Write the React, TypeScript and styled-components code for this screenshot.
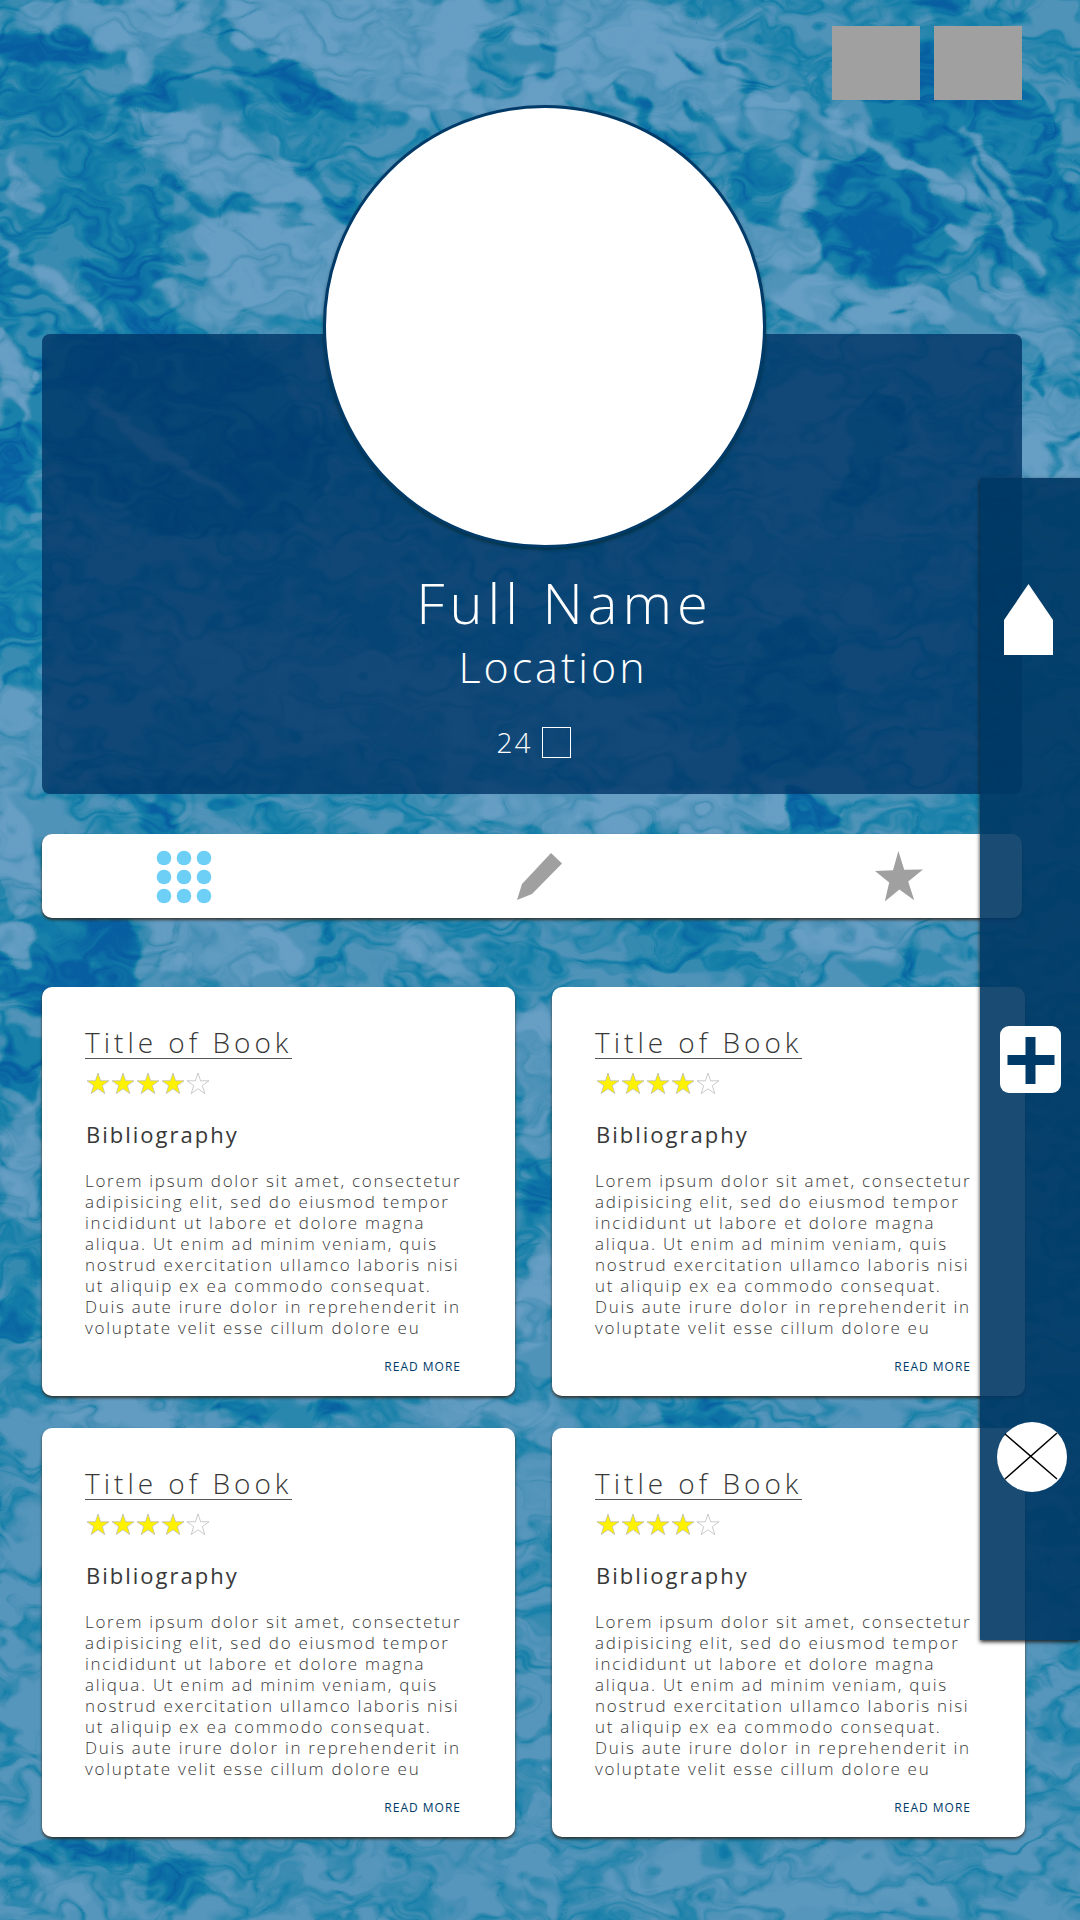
import React from "react";
import styled, { createGlobalStyle } from "styled-components";

const navy = "#003a68";
const grey = "#a0a0a0";
const sky = "#6dcff6";

const GlobalStyle = createGlobalStyle`
  *, *::before, *::after { box-sizing: border-box; }
  body {
    margin: 0;
    background: #3f87b2;
    color: #383838;
    font-family: "Open Sans", "Noto Sans", sans-serif;
    font-weight: 300;
  }
  h1, h2, h3, p { margin: 0; font-weight: 300; }
  button { border: 0; padding: 0; background: none; cursor: pointer; font: inherit; }
  svg { display: block; }
`;

const Page = styled.div`
  position: relative;
  isolation: isolate;
  overflow: hidden;
  min-height: 100vh;
  padding: 26px 58px 83px 42px;
`;

const Water = styled.svg`
  position: absolute;
  inset: 0;
  z-index: -1;
  width: 100%;
  height: 100%;
`;

const Actions = styled.header`
  display: flex;
  justify-content: flex-end;
  gap: 14px;
`;

const ActionButton = styled.button`
  width: 88px;
  height: 74px;
  background: ${grey};
`;

const Profile = styled.section`
  display: flex;
  flex-direction: column;
`;

const Avatar = styled.div`
  position: relative;
  align-self: center;
  width: 443px;
  height: 443px;
  margin: 5px 0 -214px 25px;
  border: 3px solid ${navy};
  border-radius: 50%;
  background: #fff;
  box-shadow: 0 2px 3px rgba(0, 40, 40, 0.6);
`;

const ProfilePanel = styled.div`
  display: flex;
  flex-direction: column;
  align-items: center;
  padding: 236px 0 36px;
  border-radius: 8px;
  background: rgba(0, 53, 102, 0.8);
  color: #fff;
`;

const Name = styled.h1`
  padding-left: 65px;
  font-size: 56px;
  line-height: 64px;
  letter-spacing: 5px;
`;

const Location = styled.p`
  margin-top: 9px;
  padding-left: 42px;
  font-size: 43px;
  line-height: 48px;
  letter-spacing: 3px;
`;

const Count = styled.p`
  display: flex;
  gap: 10px;
  margin-top: 36px;
  padding-left: 4px;
  font-size: 28px;
  line-height: 30px;
  letter-spacing: 2px;
`;

const CountBox = styled.span`
  width: 29px;
  height: 31px;
  border: 1px solid #fff;
`;

const Tabs = styled.nav`
  display: flex;
  justify-content: space-between;
  align-items: center;
  height: 84px;
  margin-top: 40px;
  padding: 0 95px 0 114px;
  border-radius: 10px;
  background: #fff;
  box-shadow: 0 2px 3px rgba(50, 40, 30, 0.85);
`;

const TabButton = styled.button<{ $active?: boolean }>`
  display: grid;
  place-items: center;
  width: 56px;
  height: 56px;
  color: ${(p) => (p.$active ? sky : grey)};
`;

const Books = styled.main`
  display: grid;
  grid-template-columns: 1fr 1fr;
  gap: 32px 37px;
  margin: 69px -3px 0 0;
`;

const Card = styled.article`
  display: flex;
  flex-direction: column;
  align-items: flex-start;
  padding: 39px 43px 21px;
  border-radius: 10px;
  background: #fff;
  box-shadow: 0 2px 3px rgba(50, 40, 30, 0.85);
`;

const Title = styled.h2`
  border-bottom: 1px solid #555;
  font-size: 28px;
  line-height: 32px;
  letter-spacing: 4px;
`;

const Stars = styled.div`
  display: flex;
  gap: 3px;
  margin-top: 14px;
  padding-left: 2px;
`;

const Subtitle = styled.h3`
  margin-top: 26px;
  padding-left: 1px;
  font-size: 22px;
  font-weight: 400;
  line-height: 28px;
  letter-spacing: 2px;
`;

const Summary = styled.p`
  margin-top: 22px;
  font-size: 17px;
  line-height: 21px;
  letter-spacing: 0.1em;
`;

const ReadMore = styled.a`
  align-self: flex-end;
  margin: 21px 11px 0 0;
  color: ${navy};
  font-size: 12px;
  font-weight: 400;
  line-height: 16px;
  letter-spacing: 1px;
  text-decoration: none;
`;

const SideBar = styled.nav`
  position: absolute;
  top: 478px;
  right: 0;
  display: flex;
  flex-direction: column;
  align-items: center;
  width: 100px;
  padding: 106px 0 148px;
  background: rgba(0, 55, 100, 0.9);
  box-shadow: 0 2px 4px rgba(20, 20, 20, 0.9);
`;

const SideButton = styled.button<{ $space?: number }>`
  margin-top: ${(p) => p.$space ?? 0}px;
`;

const starPoints = "11,0 13.6,7.8 22,7.8 15.3,12.6 17.8,20.6 11,15.8 4.2,20.6 6.7,12.6 0,7.8 8.4,7.8";

const ripples: [number, number, number, number, number, number][] = [
  // cx, cy, rx, ry, rotation, brightness
  [60, 240, 110, 180, -20, 60],
  [110, 20, 90, 22, 0, 225],
  [60, 50, 75, 15, 5, 0],
  [165, 35, 12, 60, 40, 225],
  [400, 50, 190, 60, 10, 225],
  [260, 70, 70, 16, 45, 20],
  [310, 90, 50, 14, 30, 10],
  [230, 165, 120, 30, 35, 225],
  [280, 240, 80, 80, 0, 230],
  [160, 95, 45, 16, 0, 15],
  [225, 98, 30, 12, 10, 15],
  [145, 155, 60, 9, 40, 30],
  [190, 190, 80, 8, 25, 40],
  [330, 190, 55, 10, 40, 30],
  [250, 205, 70, 6, 12, 60],
  [130, 215, 40, 18, 0, 50],
  [25, 190, 14, 28, -15, 220],
  [60, 290, 110, 8, 40, 215],
  [130, 275, 50, 26, 15, 0],
  [210, 312, 60, 12, 20, 180],
  [20, 380, 14, 60, -20, 225],
  [10, 470, 24, 70, 0, 0],
  [500, 60, 30, 40, 0, 90],
  [560, 55, 50, 14, 0, 45],
  [650, 60, 110, 60, 25, 220],
  [640, 110, 30, 7, 50, 30],
  [700, 120, 24, 6, 50, 30],
  [740, 70, 30, 6, 45, 30],
  [690, 60, 20, 5, 50, 30],
  [670, 140, 26, 6, 55, 30],
  [730, 150, 34, 6, 50, 40],
  [780, 110, 30, 30, 0, 215],
  [760, 190, 30, 40, 10, 50],
  [800, 210, 10, 60, 10, 230],
  [770, 245, 50, 20, 0, 225],
  [960, 110, 110, 60, 25, 0],
  [1030, 210, 50, 90, -20, 10],
  [890, 215, 75, 70, 0, 0],
  [920, 170, 110, 9, 30, 235],
  [1010, 220, 60, 9, 60, 225],
  [1000, 170, 60, 5, 42, 200],
  [960, 235, 22, 12, 40, 200],
  [860, 305, 90, 22, 3, 230],
  [960, 300, 60, 10, 30, 60],
  [850, 305, 18, 4, 0, 30],
  [903, 312, 12, 4, 10, 30],
  [1040, 330, 60, 26, 40, 210],
  [1055, 440, 40, 60, 0, 225],
  [1040, 380, 6, 18, 0, 20],
  [1060, 450, 5, 30, 30, 30],
  [970, 15, 60, 12, 10, 20],
  [180, 430, 160, 100, 20, 20],
  [160, 450, 90, 8, 35, 190],
  [640, 600, 160, 120, 0, 110],
  [400, 700, 300, 50, 10, 170],
  [830, 480, 90, 160, 10, 150],
  [870, 450, 26, 60, 20, 20],
  [790, 700, 50, 90, 10, 20],
  [20, 600, 30, 90, 0, 60],
  [20, 740, 40, 60, 0, 190],
  [250, 810, 200, 14, 15, 60],
  [150, 815, 60, 8, 45, 0],
  [640, 810, 200, 24, 0, 215],
  [810, 815, 26, 20, 0, 0],
  [10, 845, 24, 60, -20, 210],
  [60, 960, 90, 50, 0, 0],
  [10, 940, 24, 26, 0, 220],
  [150, 935, 12, 40, 15, 200],
  [230, 950, 70, 34, 0, 220],
  [330, 960, 16, 40, 0, 60],
  [440, 960, 60, 14, 40, 210],
  [680, 950, 60, 30, 0, 50],
  [860, 930, 60, 22, 0, 210],
  [900, 970, 60, 16, 0, 40],
  [20, 1060, 24, 36, 0, 0],
  [20, 1160, 18, 60, 0, 220],
  [535, 1080, 22, 80, 0, 210],
  [535, 1190, 14, 30, -30, 30],
  [535, 1290, 18, 60, 10, 215],
  [120, 1412, 80, 12, 0, 190],
  [280, 1412, 70, 14, 0, 30],
  [480, 1412, 80, 14, 0, 200],
  [700, 1412, 50, 14, 0, 30],
  [20, 1300, 18, 50, 20, 50],
  [60, 1853, 100, 10, 0, 20],
  [180, 1885, 34, 28, 30, 40],
  [60, 1890, 34, 22, 0, 170],
  [800, 1880, 200, 30, 0, 155],
  [720, 1860, 16, 12, 0, 50],
];

function WaterBackground() {
  return (
    <Water viewBox="0 0 1080 1920" preserveAspectRatio="xMidYMid slice" aria-hidden="true">
      <defs>
        <filter id="soften" x="-50%" y="-80%" width="200%" height="260%">
          <feGaussianBlur stdDeviation="2" />
        </filter>
        <filter
          id="water"
          filterUnits="userSpaceOnUse"
          x="-150"
          y="-150"
          width="1380"
          height="2220"
          colorInterpolationFilters="sRGB"
        >
          <feTurbulence type="fractalNoise" baseFrequency="0.022 0.03" numOctaves="2" seed="8" result="flow" />
          <feTurbulence type="turbulence" baseFrequency="0.012 0.026" numOctaves="3" seed="21" result="waves" />
          <feDisplacementMap in="waves" in2="flow" scale="90" xChannelSelector="R" yChannelSelector="G" result="bent" />
          <feColorMatrix in="bent" type="matrix" values="2.2 0 0 0 0  2.2 0 0 0 0  2.2 0 0 0 0  0 0 0 0 1" result="lines" />
          <feDisplacementMap in="SourceGraphic" in2="flow" scale="44" xChannelSelector="G" yChannelSelector="R" result="shapes" />
          <feComposite in="shapes" in2="lines" operator="arithmetic" k1="0" k2="0.78" k3="0.46" k4="-0.1" result="mix" />
          <feComponentTransfer in="mix">
            <feFuncR type="table" tableValues="0.03 0.05 0.08 0.2 0.3 0.36 0.4" />
            <feFuncG type="table" tableValues="0.37 0.44 0.5 0.54 0.57 0.6 0.62" />
            <feFuncB type="table" tableValues="0.63 0.65 0.66 0.69 0.72 0.75 0.77" />
            <feFuncA type="linear" slope="0" intercept="1" />
          </feComponentTransfer>
        </filter>
      </defs>
      <g filter="url(#water)">
        <rect x="-150" y="-150" width="1380" height="1550" fill="rgb(115,115,115)" />
        <rect x="-150" y="1400" width="1380" height="670" fill="rgb(135,135,135)" />
        {ripples.map(([cx, cy, rx, ry, turn, tone], i) => (
          <ellipse
            key={i}
            cx={cx}
            cy={cy}
            rx={rx}
            ry={ry}
            transform={`rotate(${turn} ${cx} ${cy})`}
            fill={`rgb(${tone},${tone},${tone})`}
            filter="url(#soften)"
          />
        ))}
      </g>
    </Water>
  );
}

function GridIcon() {
  return (
    <svg width="56" height="56" viewBox="0 0 56 56" fill="currentColor">
      {[8, 28, 48].map((x) => [10, 29, 48].map((y) => <circle key={`${x}-${y}`} cx={x} cy={y} r="7.3" />))}
    </svg>
  );
}

function PencilIcon() {
  return (
    <svg width="50" height="47" viewBox="0 0 50 47" fill="currentColor">
      <path d="M34 0 L45 10.5 L15 41 L0 47 L5 31 Z" />
    </svg>
  );
}

function FavouriteIcon() {
  return (
    <svg width="48" height="51" viewBox="0 0 48 51" fill="currentColor">
      <path d="M23.4 0 L29.2 18.8 L48 18.4 L33.2 30.4 L39.2 49.2 L24.4 38.4 L9.8 50.4 L14.2 31.4 L0 20 L18 19.2 Z" />
    </svg>
  );
}

function Rating({ value }: { value: number }) {
  return (
    <Stars role="img" aria-label={`${value} / 5`}>
      {[1, 2, 3, 4, 5].map((n) => (
        <svg key={n} width="22" height="21" viewBox="0 0 22 21" overflow="visible">
          <polygon points={starPoints} fill={n <= value ? "#fff200" : "#fff"} stroke="#b5b5b5" strokeWidth="0.7" />
        </svg>
      ))}
    </Stars>
  );
}

const summary =
  "Lorem ipsum dolor sit amet, consectetur adipisicing elit, sed do eiusmod tempor incididunt ut labore et dolore magna aliqua. Ut enim ad minim veniam, quis nostrud exercitation ullamco laboris nisi ut aliquip ex ea commodo consequat. Duis aute irure dolor in reprehenderit in voluptate velit esse cillum dolore eu";

const books = [1, 2, 3, 4].map((id) => ({ id, title: "Title of Book", rating: 4, summary }));

export default function App() {
  return (
    <>
      <GlobalStyle />
      <Page>
        <WaterBackground />
        <Actions>
          <ActionButton type="button" />
          <ActionButton type="button" />
        </Actions>
        <Profile>
          <Avatar />
          <ProfilePanel>
            <Name>Full Name</Name>
            <Location>Location</Location>
            <Count>
              24
              <CountBox />
            </Count>
          </ProfilePanel>
        </Profile>
        <Tabs>
          <TabButton type="button" $active>
            <GridIcon />
          </TabButton>
          <TabButton type="button">
            <PencilIcon />
          </TabButton>
          <TabButton type="button">
            <FavouriteIcon />
          </TabButton>
        </Tabs>
        <Books>
          {books.map((book) => (
            <Card key={book.id}>
              <Title>{book.title}</Title>
              <Rating value={book.rating} />
              <Subtitle>Bibliography</Subtitle>
              <Summary>{book.summary}</Summary>
              <ReadMore href="#">READ MORE</ReadMore>
            </Card>
          ))}
        </Books>
        <SideBar>
          <SideButton type="button">
            <svg width="53" height="71" viewBox="0 0 53 71">
              <path d="M24.5 0 L49 36 V71 H0 V36 Z" fill="#fff" />
            </svg>
          </SideButton>
          <SideButton type="button" $space={371}>
            <svg width="61" height="67" viewBox="0 0 61 67">
              <rect width="61" height="67" rx="9" fill="#fff" />
              <path d="M25.5 11 h10 v18 h19 v10 h-19 v19 h-10 v-19 h-18 v-10 h18 Z" fill={navy} />
            </svg>
          </SideButton>
          <SideButton type="button" $space={329}>
            <svg width="74" height="70" viewBox="-4 0 74 70">
              <circle cx="35" cy="35" r="35" fill="#fff" />
              <path d="M8 12 L60 57 M60 11 L8 57" stroke="#000" strokeWidth="1.5" />
            </svg>
          </SideButton>
        </SideBar>
      </Page>
    </>
  );
}
